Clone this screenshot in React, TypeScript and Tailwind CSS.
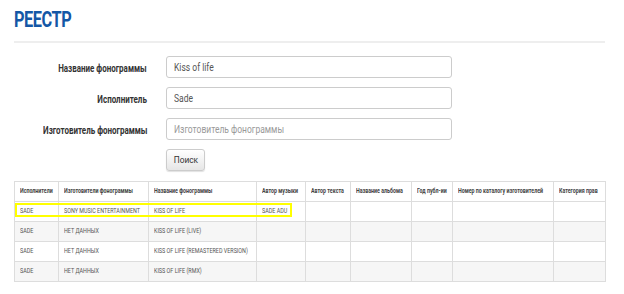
import React from 'react';

const cols = [44, 90, 108, 49, 45, 61, 41, 101, 52];

const headers = [
  'Исполнители',
  'Изготовители фонограммы',
  'Название фонограммы',
  'Автор музыки',
  'Автор текста',
  'Название альбома',
  'Год публ-ии',
  'Номер по каталогу изготовителей',
  'Категория прав',
];

const rows = [
  ['SADE', 'SONY MUSIC ENTERTAINMENT', 'KISS OF LIFE', 'SADE ADU'],
  ['SADE', 'НЕТ ДАННЫХ', 'KISS OF LIFE (LIVE)', ''],
  ['SADE', 'НЕТ ДАННЫХ', 'KISS OF LIFE (REMASTERED VERSION)', ''],
  ['SADE', 'НЕТ ДАННЫХ', 'KISS OF LIFE (RMX)', ''],
];

function Field({ label, value, placeholder }: { label: string; value?: string; placeholder?: string }) {
  return (
    <div className="flex items-center">
      <div className="w-[147px] text-right leading-none">
        <span className="inline-block origin-right scale-x-[0.8] whitespace-nowrap text-[10px] font-bold text-[#333]">
          {label}
        </span>
      </div>
      <div className="ml-[19px] flex h-[22px] w-[286px] items-center rounded-[3px] border border-[#ccc] bg-white px-[7px]">
        <span
          className={
            value
              ? 'inline-block origin-left scale-x-[0.85] whitespace-nowrap text-[10px] text-[#555]'
              : 'inline-block origin-left scale-x-[0.85] whitespace-nowrap text-[10px] text-[#999]'
          }
        >
          {value || placeholder}
        </span>
      </div>
    </div>
  );
}

export default function App() {
  return (
    <div className="h-[294px] w-[624px] bg-white font-['Roboto',sans-serif] overflow-hidden">
      <div className="px-[14px] pt-[8px]">
        <h1 className="origin-left scale-x-[0.74] text-[22px] font-bold leading-[24px] text-[#1457a6] tracking-tight">
          РЕЕСТР
        </h1>
        <div className="mt-[9px] h-[2px] w-[591px] bg-[#eeeeee]" />
      </div>

      <div className="mt-[13px] flex flex-col gap-[9px]">
        <Field label="Название фонограммы" value="Kiss of life" />
        <Field label="Исполнитель" value="Sade" />
        <Field label="Изготовитель фонограммы" placeholder="Изготовитель фонограммы" />
        <div className="ml-[166px]">
          <button className="flex h-[22px] w-[39px] items-center justify-center rounded-[3px] border border-[#ccc] bg-gradient-to-b from-white to-[#e6e6e6] shadow-[0_1px_1px_rgba(0,0,0,0.12)]">
            <span className="inline-block scale-x-[0.88] text-[9.5px] text-[#333]">Поиск</span>
          </button>
        </div>
      </div>

      <div className="relative ml-[14px] mt-[10px] w-[591px]">
        <table className="w-[591px] table-fixed border-collapse text-[6.6px] text-[#555]">
          <colgroup>
            {cols.map((w, i) => (
              <col key={i} style={{ width: w }} />
            ))}
          </colgroup>
          <thead>
            <tr className="h-[20px]">
              {headers.map(h => (
                <th key={h} className="border border-[#ddd] px-[5px] text-left font-bold text-[#444] whitespace-nowrap">
                  <span className="inline-block origin-left scale-x-[0.8]">{h}</span>
                </th>
              ))}
            </tr>
          </thead>
          <tbody>
            {rows.map((r, i) => (
              <tr key={i} className={i % 2 === 1 ? 'h-[20px] bg-[#f6f6f6]' : 'h-[20px] bg-white'}>
                {cols.map((_, j) => (
                  <td key={j} className="border border-[#ddd] px-[5px] whitespace-nowrap">
                    <span className="inline-block origin-left scale-x-[0.82]">{r[j] ?? ''}</span>
                  </td>
                ))}
              </tr>
            ))}
          </tbody>
        </table>
        <div className="pointer-events-none absolute left-[1px] top-[22px] h-[14px] w-[277px] border-2 border-[#ffff00]" />
      </div>
    </div>
  );
}
